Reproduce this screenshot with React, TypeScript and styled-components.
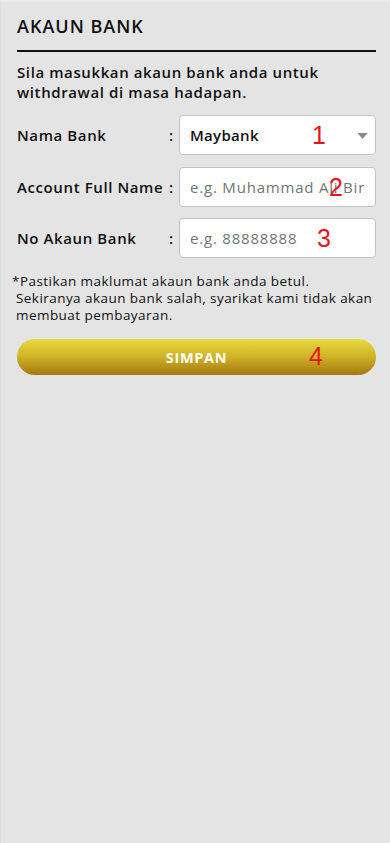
import React, { useState } from 'react';
import styled, { createGlobalStyle } from 'styled-components';

const GlobalStyle = createGlobalStyle`
  html, body {
    margin: 0;
    padding: 0;
    background: #e4e4e4;
  }
  body {
    font-family: "Open Sans", "Noto Sans", sans-serif;
    color: #111;
  }
  * {
    box-sizing: border-box;
  }
`;

const BANKS = ['Maybank', 'CIMB Bank', 'Public Bank', 'RHB Bank', 'Hong Leong Bank', 'Bank Islam'];

function App() {
    const [bank, setBank] = useState('Maybank');
    const [name, setName] = useState('');
    const [account, setAccount] = useState('');

    return (
        <Page>
            <GlobalStyle />
            <Title>AKAUN BANK</Title>
            <Intro>Sila masukkan akaun bank anda untuk withdrawal di masa hadapan.</Intro>

            <Form>
                <Row>
                    <Label>Nama Bank</Label>
                    <Colon>:</Colon>
                    <Field>
                        <Select value={bank} onChange={e => setBank(e.target.value)}>
                            {BANKS.map(b => <option key={b} value={b}>{b}</option>)}
                        </Select>
                        <Caret viewBox="0 0 10 6">
                            <path d="M0 0 L10 0 L5 6 Z" fill="#888" />
                        </Caret>
                        <Marker left={133}>1</Marker>
                    </Field>
                </Row>
                <Row>
                    <Label>Account Full Name</Label>
                    <Colon>:</Colon>
                    <Field>
                        <Input
                            placeholder="e.g. Muhammad Ali Bir"
                            value={name}
                            onChange={e => setName(e.target.value)}
                        />
                        <Marker left={150}>2</Marker>
                    </Field>
                </Row>
                <Row>
                    <Label>No Akaun Bank</Label>
                    <Colon>:</Colon>
                    <Field>
                        <Input
                            placeholder="e.g. 88888888"
                            value={account}
                            onChange={e => setAccount(e.target.value)}
                        />
                        <Marker left={138}>3</Marker>
                    </Field>
                </Row>
            </Form>

            <Note>
                *Pastikan maklumat akaun bank anda betul.
                <br />
                &nbsp;Sekiranya akaun bank salah, syarikat kami tidak akan
                <br />
                &nbsp;membuat pembayaran.
            </Note>

            <SaveButton type="button">
                SIMPAN
                <Marker left={292} top={4}>4</Marker>
            </SaveButton>
        </Page>
    );
}

const Page = styled.div`
  min-height: 843px;
  padding: 12px 14px 0 16px;
  border-top: 2px solid #ececee;
  border-left: 1px solid #dcdce0;
`;

const Title = styled.h1`
  margin: 0;
  padding: 0 0 12px;
  font-size: 18px;
  font-weight: 600;
  letter-spacing: 1px;
  border-bottom: 2px solid #111;
`;

const Intro = styled.p`
  margin: 10px 0 0;
  font-size: 15px;
  font-weight: 600;
  line-height: 20px;
  letter-spacing: 0.6px;
`;

const Form = styled.div`
  display: flex;
  flex-direction: column;
  gap: 11.5px;
  margin-top: 13px;
`;

const Row = styled.div`
  display: flex;
  align-items: center;
`;

const Label = styled.span`
  width: 152px;
  font-size: 15px;
  font-weight: 600;
  letter-spacing: 0.6px;
  white-space: nowrap;
`;

const Colon = styled.span`
  width: 10px;
  font-size: 15px;
  font-weight: 600;
`;

const Field = styled.div`
  position: relative;
  flex: 1;
  height: 40px;
`;

const controlBase = `
  width: 100%;
  height: 100%;
  border: 1px solid #c4c4c4;
  border-radius: 4px;
  background: #fff;
  padding: 0 10px;
  font-family: "Open Sans", "Noto Sans", sans-serif;
  font-size: 15px;
  outline: none;
`;

const Select = styled.select`
  ${controlBase}
  appearance: none;
  font-weight: 600;
  letter-spacing: 0.3px;
  color: #111;
`;

const Input = styled.input`
  ${controlBase}
  letter-spacing: 0.8px;
  font-weight: 500;
  color: #111;
  &::placeholder {
    color: #747474;
  }
`;

const Caret = styled.svg`
  position: absolute;
  right: 8px;
  top: 18px;
  width: 11px;
  height: 6px;
  pointer-events: none;
`;

const Marker = styled.span<{ left: number; top?: number }>`
  position: absolute;
  left: ${p => p.left}px;
  top: ${p => (p.top ?? 7)}px;
  font-family: "Liberation Sans", Arial, sans-serif;
  font-size: 25px;
  line-height: 26px;
  font-weight: 400;
  letter-spacing: 0;
  color: #e8141b;
  pointer-events: none;
`;

const Note = styled.p`
  margin: 15px 0 0 -5px;
  font-size: 13.5px;
  font-weight: 500;
  line-height: 17px;
  letter-spacing: 0.45px;
  white-space: nowrap;
`;

const SaveButton = styled.button`
  position: relative;
  display: flex;
  align-items: center;
  justify-content: center;
  width: 100%;
  height: 36px;
  margin-top: 15px;
  border: none;
  border-radius: 18px;
  background: linear-gradient(to bottom, #e7da40 0%, #cfb228 50%, #a4780c 100%);
  color: #fff;
  font-family: "Open Sans", "Noto Sans", sans-serif;
  font-size: 14.5px;
  font-weight: 700;
  letter-spacing: 0.7px;
  cursor: pointer;
`;

export default App;
